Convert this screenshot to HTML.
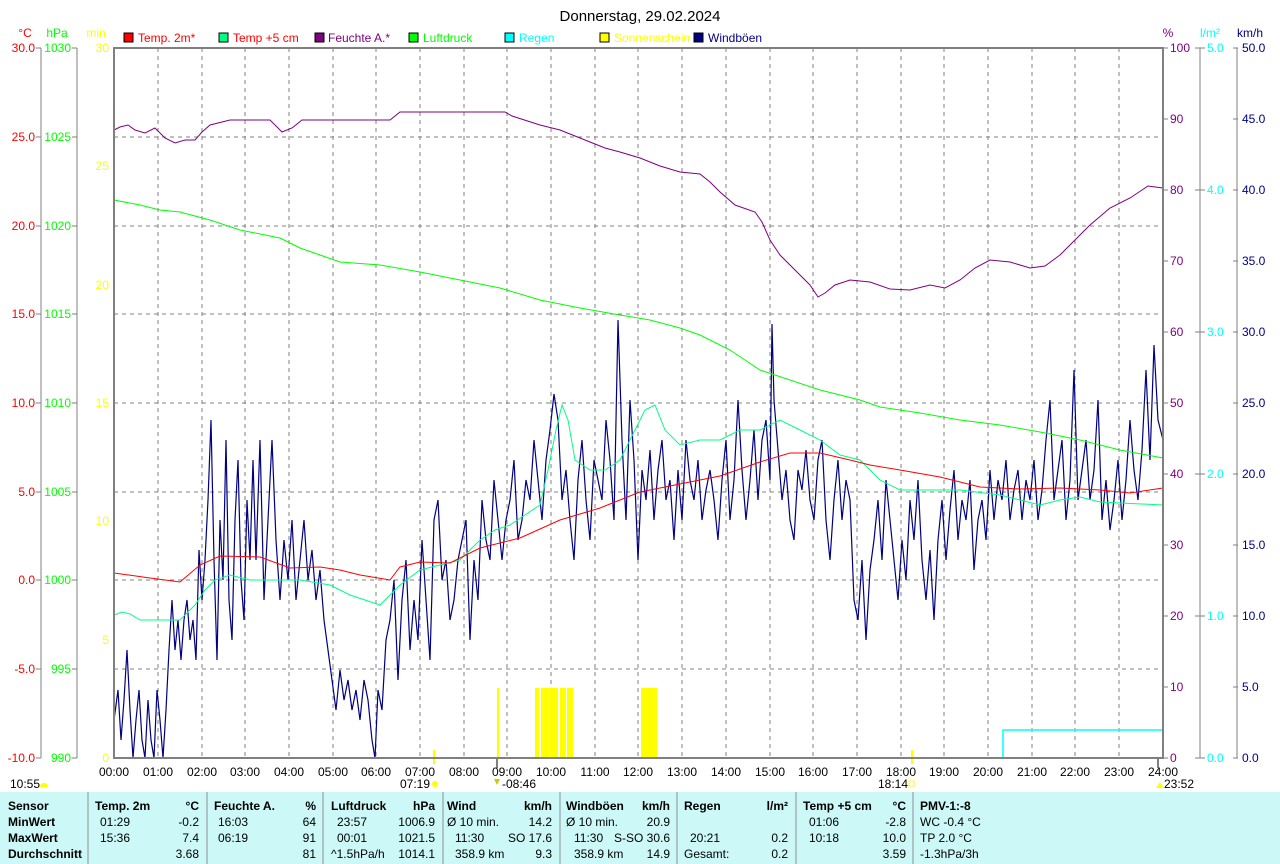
<!DOCTYPE html>
<html><head><meta charset="utf-8">
<style>
html,body{margin:0;padding:0;background:#fff;}
svg{display:block;font-family:"Liberation Sans",sans-serif;font-size:12px;}
.b{font-weight:bold}
</style></head><body>
<svg width="1280" height="864" viewBox="0 0 1280 864" xmlns="http://www.w3.org/2000/svg">
<rect width="1280" height="864" fill="#fff"/>
<text x="640" y="21" text-anchor="middle" font-size="15" fill="#000">Donnerstag, 29.02.2024</text>

<!-- legend -->
<g font-size="12">
<rect x="124" y="33" width="9" height="9" fill="#f00" stroke="#000"/><text x="138" y="42" fill="#f00">Temp. 2m*</text>
<rect x="219" y="33" width="9" height="9" fill="#00ff80" stroke="#000"/><text x="233" y="42" fill="#f00">Temp +5 cm</text>
<rect x="315" y="33" width="9" height="9" fill="#800080" stroke="#000"/><text x="328" y="42" fill="#800080">Feuchte A.*</text>
<rect x="409" y="33" width="9" height="9" fill="#0f0" stroke="#000"/><text x="423" y="42" fill="#0f0">Luftdruck</text>
<rect x="505" y="33" width="9" height="9" fill="#0ff" stroke="#000"/><text x="519" y="42" fill="#0ff">Regen</text>
<rect x="600" y="33" width="9" height="9" fill="#ff0" stroke="#000"/><text x="614" y="42" fill="#ff0">Sonnenschein</text>
<rect x="694" y="33" width="9" height="9" fill="#000080" stroke="#000"/><text x="708" y="42" fill="#000080">Windböen</text>
</g>

<!-- axis units -->
<text x="25" y="37" text-anchor="middle" fill="#f00">°C</text>
<text x="57" y="37" text-anchor="middle" fill="#0f0">hPa</text>
<text x="96" y="37" text-anchor="middle" fill="#ff0">min</text>
<text x="1168" y="37" text-anchor="middle" fill="#800080">%</text>
<text x="1210" y="37" text-anchor="middle" fill="#0ff">l/m²</text>
<text x="1250" y="37" text-anchor="middle" fill="#000080">km/h</text>

<!-- grid -->
<g stroke="#808080" stroke-width="1" stroke-dasharray="4,4">
<line x1="114" y1="137" x2="1163" y2="137"/><line x1="114" y1="226" x2="1163" y2="226"/>
<line x1="114" y1="314" x2="1163" y2="314"/><line x1="114" y1="403" x2="1163" y2="403"/>
<line x1="114" y1="492" x2="1163" y2="492"/><line x1="114" y1="580" x2="1163" y2="580"/>
<line x1="114" y1="669" x2="1163" y2="669"/>
<line x1="158" y1="48" x2="158" y2="758"/><line x1="202" y1="48" x2="202" y2="758"/>
<line x1="245" y1="48" x2="245" y2="758"/><line x1="289" y1="48" x2="289" y2="758"/>
<line x1="333" y1="48" x2="333" y2="758"/><line x1="376" y1="48" x2="376" y2="758"/>
<line x1="420" y1="48" x2="420" y2="758"/><line x1="464" y1="48" x2="464" y2="758"/>
<line x1="507" y1="48" x2="507" y2="758"/><line x1="551" y1="48" x2="551" y2="758"/>
<line x1="595" y1="48" x2="595" y2="758"/><line x1="638" y1="48" x2="638" y2="758"/>
<line x1="682" y1="48" x2="682" y2="758"/><line x1="726" y1="48" x2="726" y2="758"/>
<line x1="770" y1="48" x2="770" y2="758"/><line x1="813" y1="48" x2="813" y2="758"/>
<line x1="857" y1="48" x2="857" y2="758"/><line x1="901" y1="48" x2="901" y2="758"/>
<line x1="944" y1="48" x2="944" y2="758"/><line x1="988" y1="48" x2="988" y2="758"/>
<line x1="1032" y1="48" x2="1032" y2="758"/><line x1="1075" y1="48" x2="1075" y2="758"/>
<line x1="1119" y1="48" x2="1119" y2="758"/>
</g>

<!-- side axes -->
<g stroke="#808080" stroke-width="1">
<line x1="41" y1="48" x2="41" y2="758"/><line x1="77" y1="48" x2="77" y2="758"/>
<line x1="1200" y1="48" x2="1200" y2="758"/><line x1="1237" y1="48" x2="1237" y2="758"/>
<path d="M36 48h5M36 137h5M36 226h5M36 314h5M36 403h5M36 492h5M36 580h5M36 669h5M36 758h5"/>
<path d="M72 48h5M72 137h5M72 226h5M72 314h5M72 403h5M72 492h5M72 580h5M72 669h5M72 758h5"/>
<path d="M1163 48h5M1163 119h5M1163 190h5M1163 261h5M1163 332h5M1163 403h5M1163 474h5M1163 545h5M1163 616h5M1163 687h5M1163 758h5"/>
<path d="M1195 48h10M1195 190h10M1195 332h10M1195 474h10M1195 616h10M1195 758h10"/>
<path d="M1233 48h5M1233 119h5M1233 190h5M1233 261h5M1233 332h5M1233 403h5M1233 474h5M1233 545h5M1233 616h5M1233 687h5M1233 758h5"/>
</g>
<g text-anchor="end" fill="#f00">
<text x="35" y="52">30.0</text><text x="35" y="141">25.0</text><text x="35" y="230">20.0</text><text x="35" y="318">15.0</text><text x="35" y="407">10.0</text><text x="35" y="496">5.0</text><text x="35" y="584">0.0</text><text x="35" y="673">-5.0</text><text x="35" y="762">-10.0</text>
</g>
<g text-anchor="end" fill="#0f0">
<text x="71" y="52">1030</text><text x="71" y="141">1025</text><text x="71" y="230">1020</text><text x="71" y="318">1015</text><text x="71" y="407">1010</text><text x="71" y="496">1005</text><text x="71" y="584">1000</text><text x="71" y="673">995</text><text x="71" y="762">990</text>
</g>
<g text-anchor="end" fill="#ff0">
<text x="109" y="52">30</text><text x="109" y="170">25</text><text x="109" y="289">20</text><text x="109" y="407">15</text><text x="109" y="525">10</text><text x="109" y="644">5</text><text x="109" y="762">0</text>
</g>
<g fill="#800080">
<text x="1170" y="52">100</text><text x="1170" y="123">90</text><text x="1170" y="194">80</text><text x="1170" y="265">70</text><text x="1170" y="336">60</text><text x="1170" y="407">50</text><text x="1170" y="478">40</text><text x="1170" y="549">30</text><text x="1170" y="620">20</text><text x="1170" y="691">10</text><text x="1170" y="762">0</text>
</g>
<g fill="#0ff">
<text x="1207" y="52">5.0</text><text x="1207" y="194">4.0</text><text x="1207" y="336">3.0</text><text x="1207" y="478">2.0</text><text x="1207" y="620">1.0</text><text x="1207" y="762">0.0</text>
</g>
<g fill="#000080">
<text x="1242" y="52">50.0</text><text x="1242" y="123">45.0</text><text x="1242" y="194">40.0</text><text x="1242" y="265">35.0</text><text x="1242" y="336">30.0</text><text x="1242" y="407">25.0</text><text x="1242" y="478">20.0</text><text x="1242" y="549">15.0</text><text x="1242" y="620">10.0</text><text x="1242" y="691">5.0</text><text x="1242" y="762">0.0</text>
</g>

<!-- sunshine -->
<g fill="#ff0">
<rect x="497" y="688" width="2" height="70"/>
<rect x="535" y="688" width="4" height="70"/><rect x="541" y="688" width="8" height="70"/><rect x="550" y="688" width="8" height="70"/><rect x="560" y="688" width="6" height="70"/><rect x="567" y="688" width="6" height="70"/>
<rect x="641" y="688" width="16" height="70"/>
<rect x="433" y="750" width="2" height="14"/><rect x="911" y="750" width="2" height="14"/>
</g>
<!-- rain -->
<polyline points="1003,758 1003,730 1163,730" fill="none" stroke="#0ff" stroke-width="1.5"/>

<!-- wind gusts -->
<polyline fill="none" stroke="#000080" stroke-width="1.2" points="114,720 118,690 121,740 124,700 127,650 130,710 133,758 136,720 139,690 142,740 145,758 148,700 151,740 154,758 157,690 160,720 163,758 166,710 169,650 172,600 175,650 178,620 181,660 184,620 187,600 190,640 193,620 196,660 199,550 202,600 205,560 208,500 211,420 214,560 217,660 220,520 223,580 226,440 229,600 232,640 235,520 238,460 241,580 244,620 247,500 250,560 253,460 256,560 260,440 264,600 268,520 272,440 276,540 280,600 284,540 288,580 292,520 296,600 300,560 304,520 308,580 312,550 316,600 320,570 324,620 328,650 332,680 336,710 340,670 344,700 348,680 352,710 356,690 360,720 364,680 368,700 372,740 375,758 378,690 382,710 386,640 390,620 394,580 398,680 402,600 406,560 410,650 414,600 418,640 422,540 426,600 430,660 434,520 438,500 442,580 446,560 450,620 454,600 458,560 462,540 466,520 470,640 474,560 478,600 482,500 486,540 490,560 494,480 498,520 502,560 506,520 510,500 514,460 518,540 522,520 526,480 530,500 534,440 538,480 542,520 546,460 550,430 554,394 558,420 562,500 566,470 570,520 574,560 578,480 582,440 586,500 590,540 594,460 598,480 602,500 606,420 610,460 614,520 618,320 622,440 626,520 630,400 634,460 638,560 642,470 646,500 650,450 654,520 658,470 662,440 666,500 670,480 674,540 678,470 682,520 686,440 690,480 694,500 698,460 702,520 706,490 710,470 714,500 718,540 722,480 726,440 730,520 734,480 738,400 742,470 746,520 750,480 754,430 758,500 762,440 766,420 770,480 772,324 774,400 778,450 782,500 786,470 790,520 794,540 798,470 802,490 806,450 810,500 814,520 818,460 822,440 826,520 830,560 834,500 838,460 842,520 846,480 850,500 854,600 858,620 862,560 866,640 870,570 874,540 878,500 882,560 886,480 890,520 894,560 898,600 902,540 906,580 910,500 914,540 918,480 922,560 926,600 930,550 934,620 938,540 942,500 946,560 950,510 954,470 958,540 962,500 966,520 970,480 974,570 978,520 982,500 986,540 990,470 994,520 998,480 1002,500 1006,460 1010,520 1014,490 1018,470 1022,520 1026,480 1030,500 1034,460 1038,520 1042,490 1046,440 1050,400 1054,500 1058,470 1062,440 1066,520 1070,480 1074,370 1078,500 1082,470 1086,440 1090,500 1094,470 1098,400 1102,520 1106,480 1110,530 1114,500 1118,460 1122,520 1126,480 1130,420 1134,470 1138,500 1142,450 1146,370 1150,460 1154,345 1158,420 1163,440"/>

<!-- temp +5cm -->
<polyline fill="none" stroke="#00ff80" stroke-width="1" points="114,615 122,612 130,614 140,620 180,620 195,605 205,590 215,580 230,575 250,580 300,580 330,585 350,595 365,600 380,605 390,595 400,585 420,570 440,565 460,560 470,550 480,540 495,530 510,525 525,515 540,505 548,470 556,430 562,405 568,420 575,460 590,470 605,470 620,460 635,430 645,410 655,405 665,430 680,445 700,440 720,440 740,430 760,430 780,420 800,430 820,440 840,455 860,460 880,480 900,490 960,490 1000,495 1020,500 1040,505 1060,500 1080,497 1100,502 1163,505"/>
<!-- pressure -->
<polyline fill="none" stroke="#00ff00" stroke-width="1" points="114,200 140,205 160,210 180,212 210,220 240,230 280,238 300,248 320,255 340,262 380,265 420,272 460,280 500,288 540,300 580,308 620,315 650,320 680,328 700,335 730,350 760,370 790,380 820,390 860,400 880,407 920,413 960,420 1000,425 1040,432 1080,440 1120,450 1163,458"/>
<!-- temp 2m -->
<polyline fill="none" stroke="#ff0000" stroke-width="1" points="114,573 150,578 180,582 200,565 220,556 260,557 290,568 320,567 340,570 360,575 390,580 400,567 420,562 450,563 480,548 520,538 560,520 600,508 640,492 680,484 720,476 760,462 790,453 820,453 850,460 870,465 900,470 940,477 980,487 1020,489 1060,488 1100,490 1130,493 1163,488"/>
<!-- humidity -->
<polyline fill="none" stroke="#800080" stroke-width="1" points="114,130 120,127 128,125 135,130 145,133 155,128 165,138 175,143 185,140 195,140 202,132 210,125 230,120 270,120 282,132 292,128 302,120 390,120 400,112 420,112 505,112 512,116 540,125 560,130 575,136 590,142 605,148 620,152 640,158 660,166 680,172 700,174 710,182 720,192 735,205 755,212 762,222 770,240 780,255 790,265 800,275 810,285 818,297 825,293 835,285 850,280 870,282 890,289 910,290 930,285 945,288 960,280 975,268 990,260 1010,262 1030,268 1045,266 1060,255 1075,240 1090,225 1110,208 1130,198 1148,186 1163,188"/>

<!-- frame -->
<path d="M114 48V758H1163V48Z" fill="none" stroke="#808080" stroke-width="2"/>
<line x1="497" y1="758" x2="497" y2="768" stroke="#808080" stroke-width="2"/>
<line x1="1158" y1="758" x2="1158" y2="768" stroke="#808080" stroke-width="2"/>

<!-- hour labels -->
<g text-anchor="middle" fill="#000">
<text x="114" y="776">00:00</text><text x="158" y="776">01:00</text><text x="202" y="776">02:00</text><text x="245" y="776">03:00</text><text x="289" y="776">04:00</text><text x="333" y="776">05:00</text><text x="376" y="776">06:00</text><text x="420" y="776">07:00</text><text x="464" y="776">08:00</text><text x="507" y="776">09:00</text><text x="551" y="776">10:00</text><text x="595" y="776">11:00</text><text x="638" y="776">12:00</text><text x="682" y="776">13:00</text><text x="726" y="776">14:00</text><text x="770" y="776">15:00</text><text x="813" y="776">16:00</text><text x="857" y="776">17:00</text><text x="901" y="776">18:00</text><text x="944" y="776">19:00</text><text x="988" y="776">20:00</text><text x="1032" y="776">21:00</text><text x="1075" y="776">22:00</text><text x="1119" y="776">23:00</text><text x="1163" y="776">24:00</text>
</g>
<text x="10" y="788">10:55</text><path d="M40 787a4 4 0 0 1 8 0z" fill="#ff0"/>
<text x="400" y="788">07:19</text><circle cx="435" cy="784" r="3" fill="#ff0"/>
<text x="502" y="788">-08:46</text><path d="M494 779h6l-3 6z" fill="#cc0"/>
<text x="878" y="788">18:14</text><rect x="909" y="781" width="5" height="5" fill="none" stroke="#ff0"/>
<text x="1164" y="788">23:52</text><path d="M1156 788l4-6 4 6z" fill="#ff0"/>

<!-- table -->
<rect x="0" y="792" width="1280" height="72" fill="#ccf8f8"/>
<g stroke="#909090" stroke-width="1">
<line x1="88" y1="792" x2="88" y2="864"/><line x1="207" y1="792" x2="207" y2="864"/><line x1="323" y1="792" x2="323" y2="864"/><line x1="443" y1="792" x2="443" y2="864"/><line x1="560" y1="792" x2="560" y2="864"/><line x1="677" y1="792" x2="677" y2="864"/><line x1="796" y1="792" x2="796" y2="864"/><line x1="913" y1="792" x2="913" y2="864"/>
</g>
<g fill="#000">
<g class="b"><text x="8" y="810">Sensor</text><text x="8" y="826">MinWert</text><text x="8" y="842">MaxWert</text><text x="8" y="858">Durchschnitt</text>
<text x="95" y="810">Temp. 2m</text><text x="214" y="810">Feuchte A.</text><text x="331" y="810">Luftdruck</text><text x="447" y="810">Wind</text><text x="566" y="810">Windböen</text><text x="684" y="810">Regen</text><text x="803" y="810">Temp +5 cm</text><text x="920" y="810">PMV-1:-8</text>
<g text-anchor="end"><text x="199" y="810">°C</text><text x="316" y="810">%</text><text x="435" y="810">hPa</text><text x="552" y="810">km/h</text><text x="670" y="810">km/h</text><text x="788" y="810">l/m²</text><text x="906" y="810">°C</text></g></g>
<text x="100" y="826">01:29</text><text x="100" y="842">15:36</text>
<text x="218" y="826">16:03</text><text x="218" y="842">06:19</text>
<text x="337" y="826">23:57</text><text x="337" y="842">00:01</text><text x="331" y="858">^1.5hPa/h</text>
<text x="447" y="826">Ø 10 min.</text><text x="455" y="842">11:30</text><text x="455" y="858">358.9 km</text>
<text x="566" y="826">Ø 10 min.</text><text x="574" y="842">11:30</text><text x="574" y="858">358.9 km</text>
<text x="690" y="842">20:21</text><text x="684" y="858">Gesamt:</text>
<text x="809" y="826">01:06</text><text x="809" y="842">10:18</text>
<text x="920" y="826">WC -0.4 °C</text><text x="920" y="842">TP 2.0 °C</text><text x="920" y="858">-1.3hPa/3h</text>
<g text-anchor="end">
<text x="199" y="826">-0.2</text><text x="199" y="842">7.4</text><text x="199" y="858">3.68</text>
<text x="316" y="826">64</text><text x="316" y="842">91</text><text x="316" y="858">81</text>
<text x="435" y="826">1006.9</text><text x="435" y="842">1021.5</text><text x="435" y="858">1014.1</text>
<text x="552" y="826">14.2</text><text x="552" y="842">SO 17.6</text><text x="552" y="858">9.3</text>
<text x="670" y="826">20.9</text><text x="670" y="842">S-SO 30.6</text><text x="670" y="858">14.9</text>
<text x="788" y="842">0.2</text><text x="788" y="858">0.2</text>
<text x="906" y="826">-2.8</text><text x="906" y="842">10.0</text><text x="906" y="858">3.59</text>
</g>
</g>
</svg>
</body></html>
